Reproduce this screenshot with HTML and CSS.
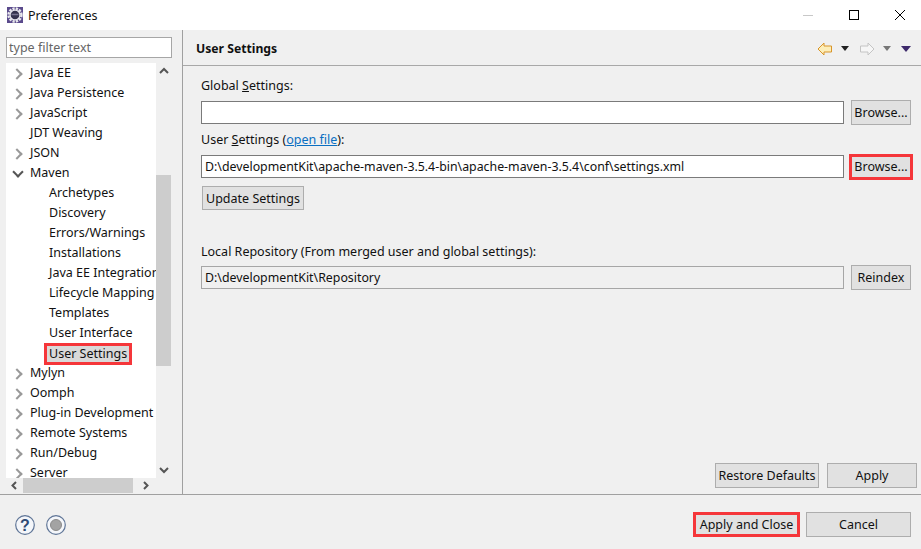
FILE: index.html
```html
<!DOCTYPE html>
<html lang="en">
<head>
    <meta charset="UTF-8">
    <meta name="viewport" content="width=device-width, initial-scale=1.0">
    <title>Preferences</title>
    <link rel="stylesheet" href="styles.css">
</head>
<body>
    <div class="window">
        <div class="titlebar">
            <svg class="app-icon" width="16" height="16" viewBox="0 0 16 16">
                <rect width="16" height="16" fill="#5a4a8c"/>
                <circle cx="8" cy="8" r="6.500" fill="none" stroke="#e8e8ec" stroke-width="2.400" stroke-dasharray="2.300 1.100"/>
                <circle cx="8" cy="8" r="5.600" fill="#e8e8ec"/>
                <circle cx="8" cy="8" r="4.300" fill="#34324c"/>
                <path d="M4.500 7.500h7" stroke="#77748f" stroke-width="1.500"/>
            </svg>
            <span class="title">Preferences</span>
            <div class="win-buttons">
                <svg width="12" height="12" viewBox="0 0 12 12"><path d="M1 6.500h10" stroke="#c8c8c8"/></svg>
                <svg width="12" height="12" viewBox="0 0 12 12"><rect x="1.500" y="1.500" width="9" height="9" fill="none" stroke="#000"/></svg>
                <svg width="12" height="12" viewBox="0 0 12 12"><path d="M1 1l10 10M11 1L1 11" stroke="#000"/></svg>
            </div>
        </div>

        <div class="content">
            <aside class="sidebar">
                <input class="filter" type="text" placeholder="type filter text">
                <div class="tree-box">
                    <div class="tree-main">
                        <ul class="tree">
                            <li class="arrow">Java EE</li>
                            <li class="arrow">Java Persistence</li>
                            <li class="arrow">JavaScript</li>
                            <li class="arrow none">JDT Weaving</li>
                            <li class="arrow">JSON</li>
                            <li class="arrow open">Maven</li>
                            <li class="child">Archetypes</li>
                            <li class="child">Discovery</li>
                            <li class="child">Errors/Warnings</li>
                            <li class="child">Installations</li>
                            <li class="child">Java EE Integration</li>
                            <li class="child">Lifecycle Mapping</li>
                            <li class="child">Templates</li>
                            <li class="child">User Interface</li>
                            <li class="child"><span class="marked">User Settings</span></li>
                            <li class="arrow">Mylyn</li>
                            <li class="arrow">Oomph</li>
                            <li class="arrow">Plug-in Development</li>
                            <li class="arrow">Remote Systems</li>
                            <li class="arrow">Run/Debug</li>
                            <li class="arrow">Server</li>
                        </ul>
                        <div class="vscroll">
                            <svg width="16" height="16" viewBox="0 0 16 16"><path d="M4 10l4-4 4 4" fill="none" stroke="#555" stroke-width="2"/></svg>
                            <div class="vtrack"><div class="vthumb"></div></div>
                            <svg width="16" height="16" viewBox="0 0 16 16"><path d="M4 6l4 4 4-4" fill="none" stroke="#555" stroke-width="2"/></svg>
                        </div>
                    </div>
                    <div class="hscroll">
                        <svg width="17" height="15" viewBox="0 0 17 15"><path d="M10 4L6.500 7.500 10 11" fill="none" stroke="#555" stroke-width="2"/></svg>
                        <div class="hthumb"></div>
                        <svg width="39" height="15" viewBox="0 0 39 15"><path d="M11 4l3.500 3.500L11 11" fill="none" stroke="#555" stroke-width="2"/></svg>
                    </div>
                </div>
            </aside>

            <main class="panel">
                <div class="panel-head">
                    <h2>User Settings</h2>
                    <div class="nav-icons">
                        <svg width="16" height="14" viewBox="0 0 16 14"><path d="M1 7l6-6v3h7.500v6H7v3z" fill="#fdeeb8" stroke="#d8952a"/></svg>
                        <svg class="drop" width="8" height="5" viewBox="0 0 8 5"><path d="M0 0h8L4 5z" fill="#222"/></svg>
                        <svg class="fwd" width="16" height="14" viewBox="0 0 16 14"><path d="M15 7L9 1v3H1.500v6H9v3z" fill="#f6f6f6" stroke="#c4c4c4"/></svg>
                        <svg class="drop" width="8" height="5" viewBox="0 0 8 5"><path d="M0 0h8L4 5z" fill="#777"/></svg>
                        <svg class="menu" width="10" height="6" viewBox="0 0 10 6"><path d="M0 0h10L5 6z" fill="#3d2a6b"/></svg>
                    </div>
                </div>

                <div class="panel-body">
                    <label class="field-label">Global <u>S</u>ettings:</label>
                    <div class="field-row">
                        <input class="text-field" type="text">
                        <button class="btn browse">Browse...</button>
                    </div>

                    <label class="field-label user-label">User <u>S</u>ettings (<a href="#">open file</a>):</label>
                    <div class="field-row">
                        <input class="text-field" type="text" value="D:\developmentKit\apache-maven-3.5.4-bin\apache-maven-3.5.4\conf\settings.xml">
                        <button class="btn browse marked-btn">Browse...</button>
                    </div>
                    <button class="btn update">Update Settings</button>

                    <label class="field-label local-label">Local Repository (From merged user and global settings):</label>
                    <div class="field-row">
                        <input class="text-field readonly" type="text" readonly value="D:\developmentKit\Repository">
                        <button class="btn browse">Reindex</button>
                    </div>

                    <div class="panel-actions">
                        <button class="btn restore">Restore Defaults</button>
                        <button class="btn apply">Apply</button>
                    </div>
                </div>
            </main>
        </div>

        <footer class="footer">
            <svg width="20" height="20" viewBox="0 0 20 20">
                <circle cx="10" cy="10" r="9.300" fill="#f4f6fa" stroke="#5f7597" stroke-width="1.200"/>
                <text x="10" y="15.500" text-anchor="middle" class="help-mark">?</text>
            </svg>
            <svg width="20" height="20" viewBox="0 0 20 20">
                <circle cx="10" cy="10" r="9.300" fill="#f4f6fa" stroke="#5f7597" stroke-width="1.200"/>
                <circle cx="10" cy="10" r="5.500" fill="#a3a3a3" stroke="#8a8a8a"/>
            </svg>
            <div class="footer-actions">
                <button class="btn close">Apply and Close</button>
                <button class="btn cancel">Cancel</button>
            </div>
        </footer>
    </div>
</body>
</html>
```

FILE: styles.css
```css
* {
    box-sizing: border-box;
}
html, body {
    margin: 0;
    height: 100%;
}
body {
    font-family: "Noto Sans", "Open Sans", Arial, sans-serif;
    font-size: 12.500px;
    color: #111;
    background-color: #f0f0f0;
    overflow: hidden;
}
.window {
    display: flex;
    flex-direction: column;
    height: 549px;
}
.titlebar {
    display: flex;
    align-items: center;
    height: 30px;
    padding-left: 7px;
    background-color: #fff;
}
.title {
    margin-left: 5px;
}
.win-buttons {
    display: flex;
    gap: 34px;
    margin-left: auto;
    padding-right: 15px;
}
.content {
    display: flex;
    height: 465px;
    border-bottom: 1px solid #a0a0a0;
}
.sidebar {
    width: 183px;
    padding: 7px 10px 0 6px;
    border-right: 1px solid #a0a0a0;
}
.filter {
    display: block;
    width: 166px;
    height: 21px;
    padding: 0 2px;
    font: inherit;
    border: 1px solid #a6a6a6;
    outline: none;
}
.filter::placeholder {
    color: #666;
}
.tree-box {
    margin-top: 5px;
    width: 166px;
}
.tree-main {
    display: flex;
    height: 415px;
}
.tree {
    width: 150px;
    margin: 0;
    padding: 0;
    list-style: none;
    background-color: #fff;
    overflow: hidden;
}
.tree li {
    height: 20px;
    line-height: 19px;
    white-space: nowrap;
}
.arrow {
    position: relative;
    padding-left: 24px;
}
.arrow::before {
    content: "";
    position: absolute;
    left: 7px;
    top: 7px;
    width: 6px;
    height: 6px;
    border-top: 2px solid #999;
    border-right: 2px solid #999;
    transform: rotate(45deg);
}
.arrow.none::before {
    display: none;
}
.arrow.open::before {
    left: 8px;
    top: 5px;
    border-color: #555;
    transform: rotate(135deg);
}
.child {
    padding-left: 43px;
}
.marked {
    display: inline-block;
    margin-left: -5px;
    padding: 0 2px;
    height: 22px;
    line-height: 15px;
    background-color: #d9d9d9;
    border: 3px solid #f5363a;
}
.vscroll {
    display: flex;
    flex-direction: column;
    width: 16px;
    background-color: #f0f0f0;
}
.vtrack {
    flex: 1;
    padding-top: 96px;
}
.vthumb {
    width: 15px;
    height: 191px;
    background-color: #cdcdcd;
}
.hscroll {
    display: flex;
    align-items: center;
    height: 15px;
    background-color: #f0f0f0;
}
.hthumb {
    width: 110px;
    height: 15px;
    background-color: #cdcdcd;
}
.panel {
    flex: 1;
    display: flex;
    flex-direction: column;
}
.panel-head {
    display: flex;
    align-items: center;
    height: 36px;
    padding: 2px 0 0 13px;
    border-bottom: 1px solid #a8a8a8;
}
.panel-head h2 {
    margin: 0;
    font-size: 12.200px;
    font-weight: 700;
}
.nav-icons {
    display: flex;
    align-items: center;
    margin-left: auto;
    padding-right: 10px;
}
.drop {
    margin-left: 8px;
}
.fwd {
    margin-left: 10px;
}
.menu {
    margin-left: 10px;
}
.panel-body {
    flex: 1;
    display: flex;
    flex-direction: column;
    padding: 10px 10px 6px 18px;
}
.field-label {
    display: block;
    height: 20px;
    line-height: 20px;
}
.user-label {
    margin-top: 5px;
}
.local-label {
    margin-top: 32px;
}
.field-label a {
    color: #0a6fc2;
}
.field-row {
    display: flex;
    align-items: center;
    gap: 7px;
    height: 25px;
    margin-top: 4px;
}
.local-label + .field-row {
    margin-top: 3px;
}
.text-field {
    width: 643px;
    height: 23px;
    padding: 0 3px;
    font: inherit;
    font-size: 12.350px;
    color: #111;
    background-color: #fff;
    border: 1px solid #7a7a7a;
    outline: none;
}
.readonly {
    background-color: #f0f0f0;
    border-color: #a6a6a6;
}
.btn {
    height: 25px;
    padding: 0;
    font: inherit;
    color: #111;
    background-color: #e1e1e1;
    border: 1px solid #adadad;
}
.browse {
    width: 60px;
}
.marked-btn {
    width: 64px;
    height: 26px;
    margin: 0 -2px;
    border: 3px solid #f5363a;
}
.update {
    width: 102px;
    height: 24px;
    margin: 7px 0 0 1px;
}
.panel-actions {
    display: flex;
    justify-content: flex-end;
    gap: 8px;
    margin: auto -6px 0 0;
}
.restore {
    width: 104px;
}
.apply {
    width: 90px;
}
.footer {
    flex: 1;
    display: flex;
    align-items: center;
    gap: 11px;
    padding: 5px 10px 0 15px;
}
.help-mark {
    font-family: "Liberation Sans", Arial, sans-serif;
    font-size: 16px;
    font-weight: 700;
    fill: #2f4a75;
}
.footer-actions {
    display: flex;
    align-items: center;
    gap: 6px;
    margin-left: auto;
}
.close {
    width: 107px;
    border: 3px solid #f5363a;
}
.cancel {
    width: 105px;
}
```
